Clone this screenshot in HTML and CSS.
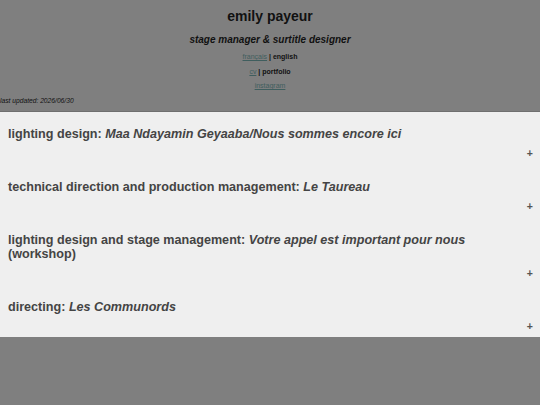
FILE: index.html
```html
<!DOCTYPE html>
<html>
<head>
<meta charset="utf-8">
<link rel="stylesheet" href="styles.css">
</head>
<body>
<header class="top">
  <h1 class="name">emily payeur</h1>
  <p class="role">stage manager &amp; surtitle designer</p>
  <p class="links"><a href="#">français</a> | <span class="cur">english</span></p>
  <p class="links"><a href="#">cv</a> | <span class="cur">portfolio</span></p>
  <p class="links"><a href="#">instagram</a></p>
  <p class="updated">last updated: 2026/06/30</p>
</header>
<main class="panel">
  <section class="item">
    <h2 class="item-title">lighting design: <em>Maa Ndayamin Geyaaba/Nous sommes encore ici</em></h2>
    <div class="toggle">+</div>
  </section>
  <section class="item">
    <h2 class="item-title">technical direction and production management: <em>Le Taureau</em></h2>
    <div class="toggle">+</div>
  </section>
  <section class="item">
    <h2 class="item-title">lighting design and stage management: <em>Votre appel est important pour nous</em> (workshop)</h2>
    <div class="toggle">+</div>
  </section>
  <section class="item">
    <h2 class="item-title">directing: <em>Les Communords</em></h2>
    <div class="toggle">+</div>
  </section>
</main>
</body>
</html>
```
FILE: styles.css
```css
html, body {
  margin: 0;
  padding: 0;
  background: #7f7f7f;
  font-family: "Liberation Sans", Arial, sans-serif;
}
.top {
  padding: 8px 0 6px;
  text-align: center;
  color: #111;
}
.name {
  margin: 0;
  font-size: 14px;
  line-height: 16px;
  font-weight: bold;
}
.role {
  margin: 10px 0 6px;
  font-size: 10px;
  line-height: 12px;
  font-weight: bold;
  font-style: italic;
}
.links {
  margin: 0 0 5.5px;
  font-size: 7px;
  line-height: 9px;
  font-weight: bold;
}
.links a {
  color: #3f5e5e;
  font-weight: normal;
  text-decoration: underline;
}
.updated {
  margin: 0;
  text-align: left;
  font-size: 6.7px;
  line-height: 9px;
  font-style: italic;
}
.panel {
  background: #efefef;
  border-top: 1px solid #6f6f6f;
  padding: 15px 0 6px;
  color: #444;
}
.item {
  padding: 0 7px 0 8px;
  margin-bottom: 22px;
}
.item:last-child {
  margin-bottom: 0;
}
.item-title {
  margin: 0;
  max-width: 500px;
  font-size: 12.6px;
  line-height: 14px;
  font-weight: bold;
}
.toggle {
  margin-top: 7px;
  text-align: right;
  font-size: 10.5px;
  line-height: 10px;
  font-weight: bold;
  color: #555;
}
```
